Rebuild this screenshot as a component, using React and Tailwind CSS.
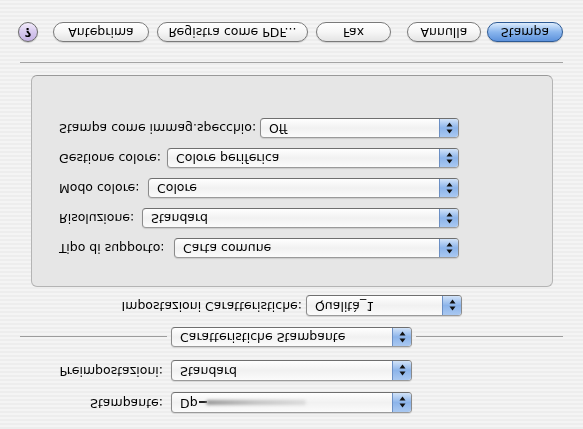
import React from "react";

function Arrows() {
  return (
    <svg width="7" height="12" viewBox="0 0 7 12" className="block">
      <path d="M3.5 0.5 L6.5 4.5 L0.5 4.5 Z" fill="#111" />
      <path d="M3.5 11.5 L6.5 7.5 L0.5 7.5 Z" fill="#111" />
    </svg>
  );
}

function Popup({ children, h = "h-[20px]", w = "flex-1" }) {
  return (
    <div
      className={`${h} ${w} flex overflow-hidden rounded-[4px] border border-[#8a8a8a] border-t-[#9a9a9a] border-b-[#6f6f6f] bg-gradient-to-t from-white via-[#f1f1f1] to-[#fbfbfb] shadow-[0_-1px_1px_rgba(0,0,0,0.12)]`}
    >
      <div className="flex flex-1 items-center overflow-hidden whitespace-nowrap pl-[8px] leading-none">
        {children}
      </div>
      <div className="flex w-[19px] items-center justify-center border-l border-[#6b8fc4] bg-gradient-to-t from-[#d2e3f8] via-[#8cb4ea] to-[#a9c8f1]">
        <Arrows />
      </div>
    </div>
  );
}

function Button({ children, w, primary = false }) {
  return (
    <div
      className={
        primary
          ? `${w} flex h-[20px] items-center justify-center rounded-full border border-[#2d5a95] bg-gradient-to-t from-[#dcebfb] via-[#8ab6ee] to-[#5d92dc] shadow-[0_-1px_1px_rgba(0,0,0,0.2)]`
          : `${w} flex h-[20px] items-center justify-center rounded-full border border-[#7a7a7a] bg-gradient-to-t from-white via-[#f6f6f6] to-[#e4e4e4] shadow-[0_-1px_1px_rgba(0,0,0,0.15)]`
      }
    >
      <span className="leading-none">{children}</span>
    </div>
  );
}

function PanelRow({ label, value, lw }) {
  return (
    <div className="flex h-[20px] items-center">
      <span className={`${lw} shrink-0 whitespace-nowrap`}>{label}</span>
      <div className="flex flex-1">
        <Popup>{value}</Popup>
      </div>
    </div>
  );
}

export default function App() {
  return (
    <div className="h-[429px] w-[583px] overflow-hidden [transform:scaleY(-1)] bg-[repeating-linear-gradient(180deg,#ededed_0px,#ededed_2px,#f4f4f4_2px,#f4f4f4_4px)] font-['DejaVu_Sans',sans-serif] text-[12.5px] text-black">
      <div className="flex flex-col">
        {/* Stampante */}
        <div className="mt-[16px] flex h-[21px] items-center">
          <div className="w-[163px] text-right whitespace-nowrap">Stampante:</div>
          <div className="ml-[8px] flex w-[241px]">
            <Popup h="h-[21px]">
              <span>Dp</span>
              <span className="ml-[1px] h-[2px] w-[8px] bg-[#222]" />
              <span className="ml-[-1px] h-[5px] w-[100px] rounded-full bg-gradient-to-r from-[#9a9a9a] via-[#c4c4c4] to-[#dcdcdc] blur-[1.5px]" />
            </Popup>
          </div>
        </div>
        {/* Preimpostazioni */}
        <div className="mt-[11px] flex h-[21px] items-center">
          <div className="w-[163px] text-right whitespace-nowrap">Preimpostazioni:</div>
          <div className="ml-[8px] flex w-[241px]">
            <Popup h="h-[21px]">Standard</Popup>
          </div>
        </div>
        {/* Caratteristiche Stampante */}
        <div className="mt-[13px] flex h-[20px] items-center px-[20px]">
          <div className="h-px flex-1 bg-[#9c9c9c]" />
          <div className="mx-[4px] flex w-[241px]">
            <Popup>Caratteristiche Stampante</Popup>
          </div>
          <div className="h-px flex-1 bg-[#9c9c9c]" />
        </div>
        {/* Impostazioni */}
        <div className="mt-[11px] flex h-[21px] items-center">
          <div className="w-[302px] text-right whitespace-nowrap">Impostazioni Caratteristiche:</div>
          <div className="ml-[4px] flex w-[156px]">
            <Popup h="h-[21px]">Qualità_1</Popup>
          </div>
        </div>
        {/* Panel */}
        <div className="mt-[8px] ml-[31px] h-[212px] w-[522px] rounded-[6px] border border-[#b4b4b4] border-b-[#999] bg-[#e6e6e6] pt-[28px] pr-[93px] pl-[27px]">
          <div className="flex flex-col gap-[10px]">
            <PanelRow lw="w-[115px]" label="Tipo di supporto:" value="Carta comune" />
            <PanelRow lw="w-[83px]" label="Risoluzione:" value="Standard" />
            <PanelRow lw="w-[89px]" label="Modo colore:" value="Colore" />
            <PanelRow lw="w-[108px]" label="Gestione colore:" value="Colore periferica" />
            <PanelRow lw="w-[201px]" label="Stampa come immag.specchio:" value="Off" />
          </div>
        </div>
        {/* separator */}
        <div className="mx-[20px] mt-[12px] h-px bg-[#a4a4a4]" />
        {/* Buttons */}
        <div className="mt-[20px] flex h-[20px] items-center pl-[18px]">
          <div className="flex h-[20px] w-[20px] items-center justify-center rounded-full border border-[#6a6a6a] bg-gradient-to-t from-[#f3ecfb] via-[#d6c8ee] to-[#c4b2e4] shadow-[0_-1px_1px_rgba(0,0,0,0.2)]">
            <span className="text-[12px] font-bold leading-none">?</span>
          </div>
          <div className="ml-[15px] flex">
            <Button w="w-[96px]">Anteprima</Button>
          </div>
          <div className="ml-[8px] flex">
            <Button w="w-[151px]">Registra come PDF...</Button>
          </div>
          <div className="ml-[8px] flex">
            <Button w="w-[75px]">Fax</Button>
          </div>
          <div className="ml-[16px] flex">
            <Button w="w-[74px]">Annulla</Button>
          </div>
          <div className="ml-[6px] flex">
            <Button w="w-[76px]" primary>
              Stampa
            </Button>
          </div>
        </div>
      </div>
    </div>
  );
}
